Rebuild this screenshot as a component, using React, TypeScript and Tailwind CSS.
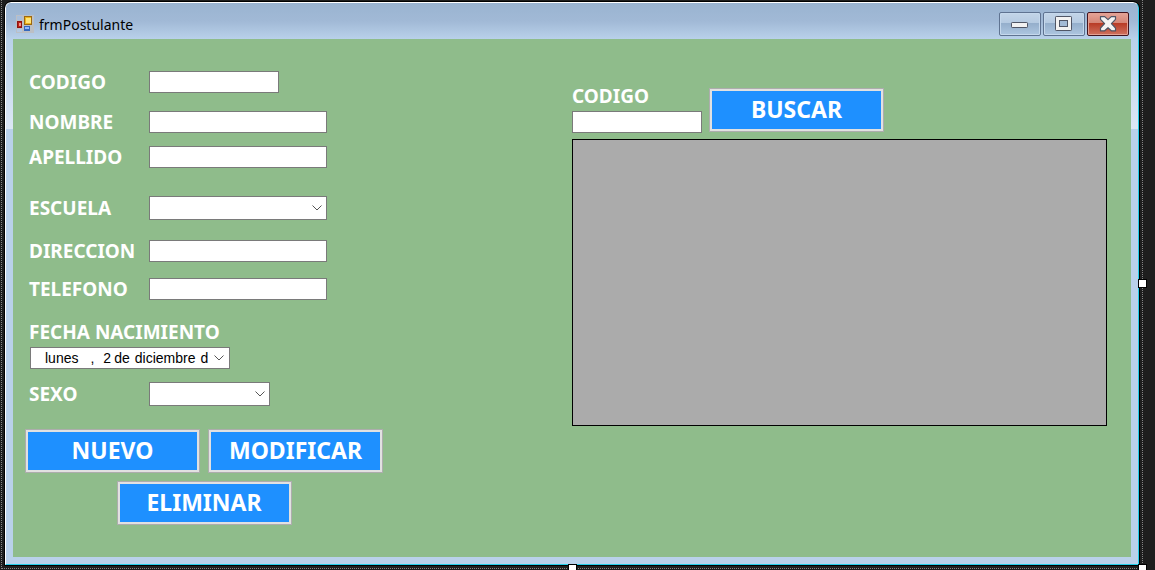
import React from "react";

const inputClass = "block h-[22px] border border-[#7a7a7a] bg-white px-1 text-sm text-black outline-none";
const labelClass = "w-[120px] shrink-0 text-[19px] leading-7 font-bold text-white whitespace-nowrap";

function Field({ id, label, width, gap }: { id: string; label: string; width: string; gap: string }) {
  return (
    <div className={`flex h-[22px] items-center ${gap}`}>
      <label htmlFor={id} className={labelClass}>{label}</label>
      <input id={id} type="text" className={`${inputClass} ${width}`} />
    </div>
  );
}

function Chevron() {
  return (
    <svg className="pointer-events-none h-[6px] w-[10px]" viewBox="0 0 10 6" fill="none" stroke="#555" strokeWidth="1" aria-hidden="true">
      <path d="M0.5 0.5 5 5 9.5 0.5" />
    </svg>
  );
}

function Combo({ id, label, width, gap }: { id: string; label: string; width: string; gap: string }) {
  return (
    <div className={`flex h-6 items-center ${gap}`}>
      <label htmlFor={id} className={labelClass}>{label}</label>
      <div className={`relative h-6 ${width}`}>
        <select id={id} className="block h-6 w-full appearance-none border border-[#7a7a7a] bg-white px-1 text-sm text-black outline-none">
          <option value=""></option>
        </select>
        <span className="pointer-events-none absolute inset-y-0 right-[5px] flex items-center"><Chevron /></span>
      </div>
    </div>
  );
}

function ActionButton({ children }: { children: React.ReactNode }) {
  return (
    <button type="button" className="flex h-[42px] w-[173px] items-center justify-center border-2 border-[#e1e1e1] bg-[#1e90ff] pb-[2px] text-[23px] leading-8 font-bold text-white outline outline-[#adadad]">
      {children}
    </button>
  );
}

const captionBase = "flex h-6 w-[42px] items-center justify-center rounded-[2px] border";
const captionBlue = "border-[#5f7391] bg-[linear-gradient(#c3d5e8_0%,#b5cae1_45%,#94aecb_46%,#adc6e0_100%)] shadow-[inset_0_0_0_1px_#c5d8ec]";
const captionRed = "border-[#43141e] bg-[linear-gradient(#e5a497_0%,#d58576_45%,#b83a25_46%,#cf725f_100%)] shadow-[inset_0_0_0_1px_#e3a194]";

function TitleBar() {
  return (
    <header className="flex h-9 items-start bg-[linear-gradient(#9ab4d1,#a1b9d6_50%,#b9d1ea)] pr-[9px] pl-[10px]">
      <svg className="mt-3 h-[18px] w-[18px] shrink-0" viewBox="0 0 18 18" aria-hidden="true">
        <rect width="18" height="18" fill="#bcbfc4" />
        <rect x="1" y="1" width="5" height="4" fill="#a8bedb" />
        <rect x="1" y="14" width="5" height="3" fill="#b3c8e2" />
        <rect x="1" y="6" width="5" height="7" fill="#8e1410" />
        <rect x="2" y="7" width="3" height="5" fill="#bd2018" />
        <rect x="3" y="8" width="2" height="3" fill="#f19584" />
        <rect x="8" y="1" width="8" height="9" fill="#9b6810" />
        <rect x="9" y="2" width="6" height="7" fill="#edb51c" />
        <rect x="10" y="3" width="5" height="5" fill="#ffe477" />
        <rect x="8" y="11" width="6" height="5" fill="#3569bd" />
        <rect x="9" y="12" width="4" height="2" fill="#91b8ff" />
      </svg>
      <h1 className="mt-3 ml-[5px] flex-1 text-sm leading-5 text-black">frmPostulante</h1>
      <div className="mt-[9px] flex gap-[2px]">
        <button type="button" aria-label="Minimizar" className={`${captionBase} ${captionBlue}`}>
          <svg className="h-[14px] w-[18px]" viewBox="0 0 18 14" aria-hidden="true">
            <rect x="0.5" y="5.5" width="16" height="5" rx="0.7" fill="#f2f2f2" stroke="#505666" />
          </svg>
        </button>
        <button type="button" aria-label="Maximizar" className={`${captionBase} ${captionBlue}`}>
          <svg className="h-4 w-[18px]" viewBox="0 0 18 16" aria-hidden="true">
            <rect x="0.5" y="0.5" width="16" height="14" rx="0.7" fill="#f2f2f2" stroke="#505666" />
            <rect x="4.5" y="4.5" width="8" height="6" fill="#a3bbd6" stroke="#505666" />
          </svg>
        </button>
        <button type="button" aria-label="Cerrar" className={`${captionBase} ${captionRed}`}>
          <svg className="h-4 w-[18px]" viewBox="0 0 18 16" aria-hidden="true">
            <path d="M1.5.6h4.2L9 3.6 12.3.6h4.2v2.7L12.4 7.6l4.1 4.4v2.8h-4.2L9 11.8l-3.3 3H1.5V12L5.6 7.6 1.5 3.3z" fill="#f4f4f4" stroke="#505666" strokeLinejoin="round" strokeWidth="1.2" />
          </svg>
        </button>
      </div>
    </header>
  );
}

function Handle({ place }: { place: string }) {
  return <span className={`absolute h-[9px] w-[9px] border border-black bg-white ${place}`} />;
}

export default function App() {
  return (
    <div className="relative min-h-screen overflow-hidden bg-[#1e1e1e] pt-[2px] pr-4 pb-1 pl-[5px] font-['Noto_Sans','Open_Sans',sans-serif]">
      <div className="pointer-events-none absolute top-0 right-3 bottom-[1px] left-[1px] border-x border-b border-dotted border-[#858585]" />
      <div className="relative overflow-hidden rounded-t-[6px] border border-t-[#ffffff] border-r-[#22cde8] border-b-[#22cde8] border-l-[#ffffff] bg-[#b9d1ea] outline outline-black">
        <TitleBar />
        <div className="bg-[linear-gradient(#b9d1ea,#dce7f5_90px,#b9d1ea_90px)] px-[7px] pb-[7px]">
          <main className="grid min-h-[518px] grid-cols-2 items-start bg-[#8fbc8b]">
            <form className="pt-8 pb-[33px] pl-4" onSubmit={(e) => e.preventDefault()}>
              <Field id="codigo" label="CODIGO" width="w-[130px]" gap="" />
              <Field id="nombre" label="NOMBRE" width="w-[178px]" gap="mt-[18px]" />
              <Field id="apellido" label="APELLIDO" width="w-[178px]" gap="mt-[13px]" />
              <Combo id="escuela" label="ESCUELA" width="w-[178px]" gap="mt-7" />
              <Field id="direccion" label="DIRECCION" width="w-[178px]" gap="mt-5" />
              <Field id="telefono" label="TELEFONO" width="w-[178px]" gap="mt-4" />
              <label id="fecha-label" htmlFor="fecha" className="mt-[18px] block text-[19px] leading-7 font-bold text-white">FECHA NACIMIENTO</label>
              <button
                id="fecha"
                type="button"
                aria-haspopup="dialog"
                aria-labelledby="fecha-label fecha"
                className="mt-[1px] ml-[1px] flex h-[22px] w-[200px] items-center border border-[#7a7a7a] bg-white pr-[5px] pl-[14px] font-['Liberation_Sans',Arial,sans-serif] text-sm text-black"
              >
                <span>lunes</span>
                <span className="ml-3">,</span>
                <span className="ml-[9px]">2</span>
                <span className="ml-[3px]">de</span>
                <span className="ml-[5px]">diciembre</span>
                <span className="ml-[5px]">d</span>
                <span className="ml-auto"><Chevron /></span>
              </button>
              <Combo id="sexo" label="SEXO" width="w-[121px]" gap="mt-[13px]" />
              <div className="mt-6 -ml-[3px] flex w-[356px] flex-wrap justify-center gap-[10px]">
                <ActionButton>NUEVO</ActionButton>
                <ActionButton>MODIFICAR</ActionButton>
                <ActionButton>ELIMINAR</ActionButton>
              </div>
            </form>
            <section className="pt-[43px] pr-6">
              <div className="flex items-end gap-2">
                <div>
                  <label htmlFor="buscar-codigo" className="block text-[19px] leading-7 font-bold text-white">CODIGO</label>
                  <input id="buscar-codigo" type="text" className={`${inputClass} mt-[1px] w-[130px]`} />
                </div>
                <div className="pb-[2px]">
                  <ActionButton>BUSCAR</ActionButton>
                </div>
              </div>
              <div role="region" aria-label="Postulantes" className="mt-[6px] h-[287px] border border-black bg-[#ababab]" />
            </section>
          </main>
        </div>
      </div>
      <Handle place="top-[279px] right-2" />
      <Handle place="bottom-[-3px] left-[568px]" />
      <Handle place="right-2 bottom-[-3px]" />
    </div>
  );
}
